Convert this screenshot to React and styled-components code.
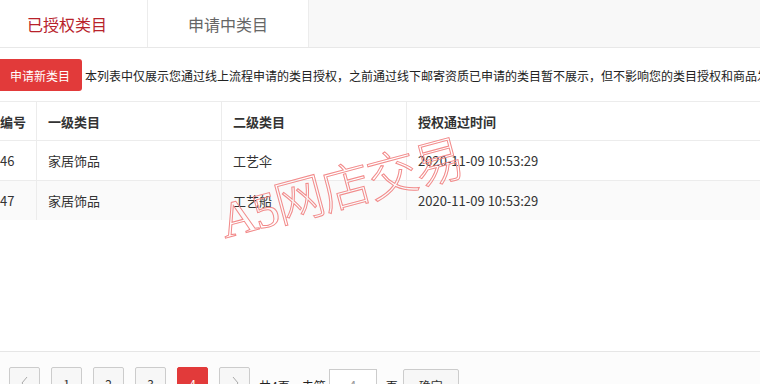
import React from "react";
import styled, { createGlobalStyle } from "styled-components";

const GlobalStyle = createGlobalStyle`
  html, body {
    margin: 0;
    padding: 0;
    width: 760px;
    height: 384px;
    overflow: hidden;
    background: #fff;
    font-family: "Noto Sans CJK SC", "Liberation Sans", sans-serif;
    color: #333;
  }
`;

const Page = styled.div`
  position: relative;
  margin-left: -13px;
  width: 800px;
  height: 400px;
  display: flex;
  flex-direction: column;
`;

const TabBar = styled.div`
  display: flex;
  height: 47px;
  background: #f8f8f8;
  border-bottom: 1px solid #e8e8e8;
`;

const Tab = styled.div`
  width: 160px;
  background: #fff;
  border-right: 1px solid #ececec;
  display: flex;
  align-items: center;
  justify-content: center;
  font-size: 16px;
  color: ${(p) => (p.$active ? "#b8222a" : "#666")};
`;

const Toolbar = styled.div`
  display: flex;
  align-items: center;
  gap: 3px;
  padding: 11px 10px 10px;
  white-space: nowrap;
`;

const RedButton = styled.button`
  height: 32px;
  padding: 0 12px 0 13px;
  border: none;
  border-radius: 3px;
  background: #e23a3a;
  color: #fff;
  font-family: inherit;
  font-size: 12px;
`;

const Note = styled.span`
  font-size: 12px;
  color: #222;
`;

const Table = styled.div`
  margin-left: 2px;
  border-top: 1px solid #ececec;
`;

const Row = styled.div`
  display: grid;
  grid-template-columns: 48px 185px 185px 1fr;
  height: ${(p) => (p.$head ? "38px" : "39px")};
  border-bottom: ${(p) => (p.$last ? "none" : "1px solid #ececec")};
  background: ${(p) => (p.$alt ? "#fafafa" : "#fff")};
`;

const Cell = styled.div`
  display: flex;
  align-items: center;
  padding-left: 11px;
  font-size: 13px;
  font-weight: ${(p) => (p.$head ? 600 : 400)};
  color: #333;
  border-right: ${(p) => (p.$end ? "none" : "1px solid #ececec")};
  white-space: nowrap;
`;

const Spacer = styled.div`
  flex: 1;
`;

const Pager = styled.div`
  display: flex;
  align-items: flex-start;
  gap: 11px;
  height: 33px;
  padding: 15px 0 0 22px;
  border-top: 1px solid #e6e6e6;
  background: #fcfcfc;
`;

const PageBtn = styled.div`
  box-sizing: border-box;
  width: 31px;
  height: 32px;
  display: flex;
  align-items: center;
  justify-content: center;
  border: 1px solid ${(p) => (p.$active ? "#e23a3a" : "#ccc")};
  background: ${(p) => (p.$active ? "#e23a3a" : "#f7f7f7")};
  color: ${(p) => (p.$active ? "#fff" : "#333")};
  font-size: 12px;
  border-radius: 2px;
`;

const PagerText = styled.span`
  display: flex;
  align-items: center;
  height: 32px;
  margin: 2px -8px 0 -2px;
  font-size: 12px;
  color: #222;
`;

const PageInput = styled.div`
  box-sizing: border-box;
  width: 48px;
  height: 32px;
  margin-top: 2px;
  border: 1px solid #ccc;
  background: #fff;
  display: flex;
  align-items: center;
  justify-content: center;
  font-size: 13px;
  color: #999;
`;

const GoBtn = styled(PageBtn)`
  width: 56px;
  margin-left: 2px;
  margin-top: 2px;
`;

const Watermark = styled.div`
  position: absolute;
  left: 240px;
  top: 196px;
  transform: rotate(-15deg);
  transform-origin: left bottom;
  font-family: "Liberation Serif", "Noto Sans CJK SC", serif;
  font-size: 50px;
  font-weight: 300;
  line-height: 1;
  color: transparent;
  -webkit-text-stroke: 1px #f28a8a;
  white-space: nowrap;
  pointer-events: none;
  letter-spacing: -2px;
`;

const Chevron = ({ dir }) => (
  <svg width="10" height="14" viewBox="0 0 10 14">
    <path
      d={dir === "left" ? "M7 1 L2 7 L7 13" : "M3 1 L8 7 L3 13"}
      fill="none"
      stroke="#aaa"
      strokeWidth="1"
    />
  </svg>
);

const rows = [
  { id: "46", first: "家居饰品", second: "工艺伞", time: "2020-11-09 10:53:29" },
  { id: "47", first: "家居饰品", second: "工艺船", time: "2020-11-09 10:53:29" },
];

export default function App() {
  return (
    <>
      <GlobalStyle />
      <Page>
        <TabBar>
          <Tab $active>已授权类目</Tab>
          <Tab>申请中类目</Tab>
        </TabBar>
        <Toolbar>
          <RedButton>申请新类目</RedButton>
          <Note>
            本列表中仅展示您通过线上流程申请的类目授权，之前通过线下邮寄资质已申请的类目暂不展示，但不影响您的类目授权和商品发布
          </Note>
        </Toolbar>
        <Table>
          <Row $head>
            <Cell $head>编号</Cell>
            <Cell $head>一级类目</Cell>
            <Cell $head>二级类目</Cell>
            <Cell $head $end>授权通过时间</Cell>
          </Row>
          {rows.map((r, i) => (
            <Row key={r.id} $alt={i % 2 === 1} $last={i === rows.length - 1}>
              <Cell>{r.id}</Cell>
              <Cell>{r.first}</Cell>
              <Cell>{r.second}</Cell>
              <Cell $end>{r.time}</Cell>
            </Row>
          ))}
        </Table>
        <Spacer />
        <Pager>
          <PageBtn><Chevron dir="left" /></PageBtn>
          <PageBtn>1</PageBtn>
          <PageBtn>2</PageBtn>
          <PageBtn>3</PageBtn>
          <PageBtn $active>4</PageBtn>
          <PageBtn><Chevron dir="right" /></PageBtn>
          <PagerText>共4页，去第</PagerText>
          <PageInput>4</PageInput>
          <PagerText>页</PagerText>
          <GoBtn>确定</GoBtn>
        </Pager>
        <Watermark>A5网店交易</Watermark>
      </Page>
    </>
  );
}
